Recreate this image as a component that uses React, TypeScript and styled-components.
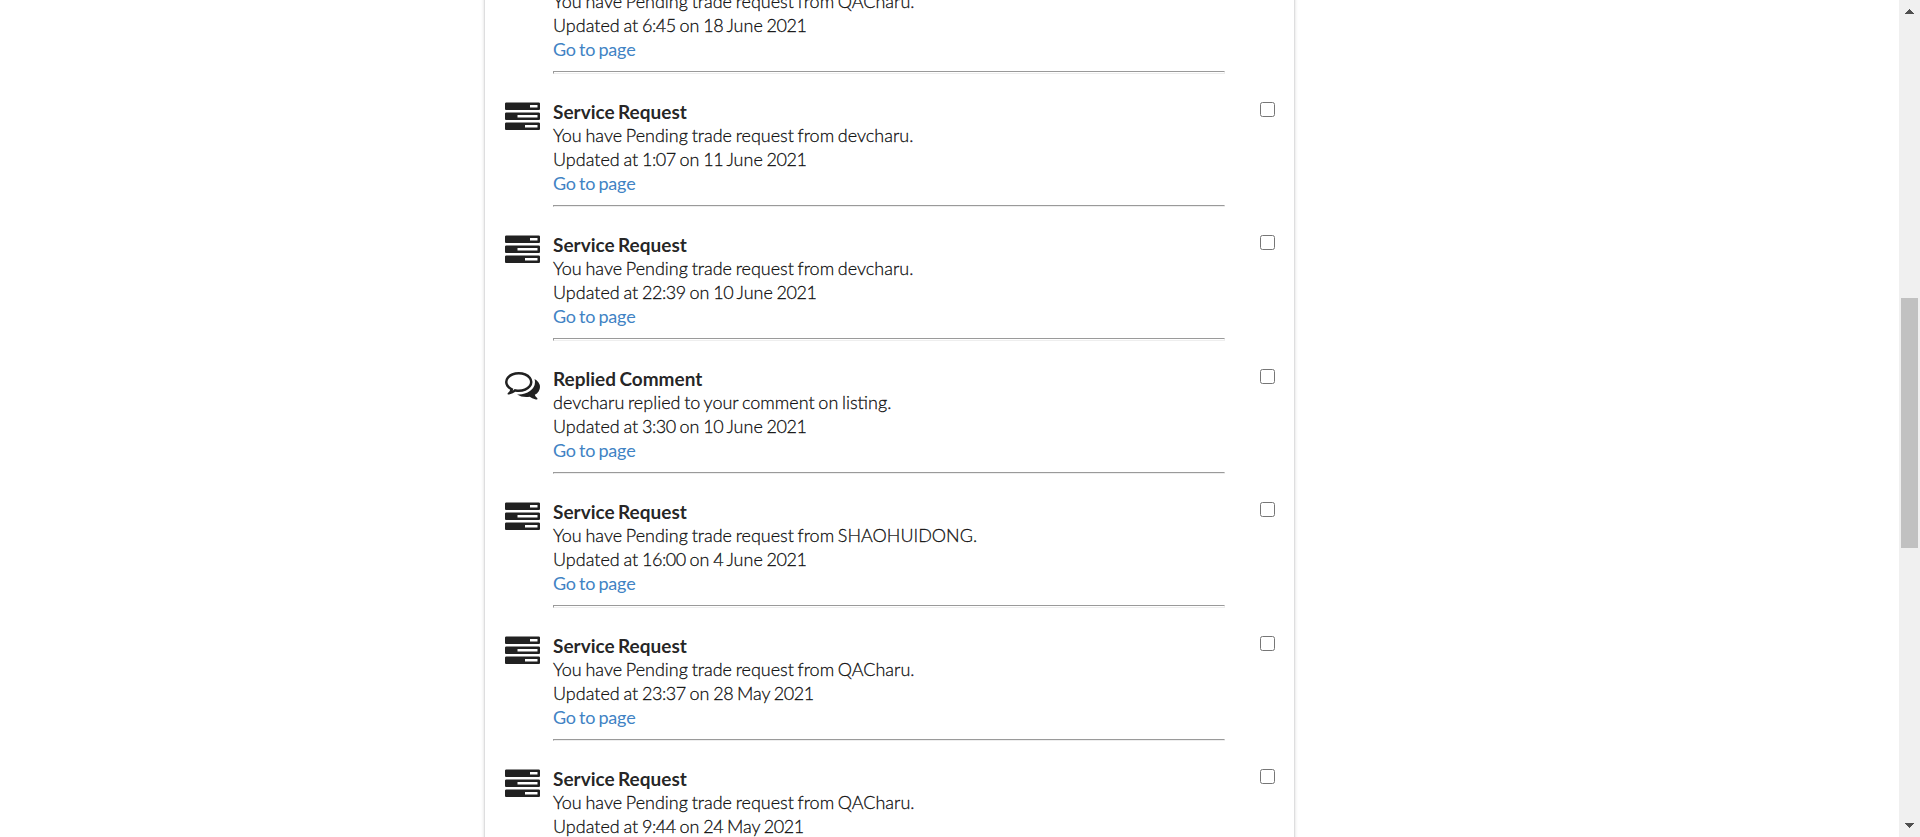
import React from "react";
import styled, { createGlobalStyle } from "styled-components";

const GlobalStyle = createGlobalStyle`
  * { box-sizing: border-box; }
  body {
    margin: 0;
    overflow: hidden;
    background: #fff;
    color: rgba(0, 0, 0, 0.87);
    font-family: Lato, "Liberation Sans", sans-serif;
    font-size: 18px;
    word-spacing: -1.2px;
  }
`;

const Page = styled.div`
  display: flex;
  height: 837px;
  overflow: hidden;
`;

const Main = styled.main`
  flex: 1;
  padding-left: 484px;
  overflow: hidden;
`;

const Segment = styled.section`
  width: 811px;
  margin-top: -52px;
  padding: 17.1px 19px 17.5px 20px;
  border: 1px solid rgba(34, 36, 38, 0.15);
  box-shadow: 0 1px 3px 0 rgba(34, 36, 38, 0.17);
`;

const Event = styled.article`
  display: flex;
  align-items: flex-start;
  height: 133.5px;
`;

const Label = styled.div`
  width: 48px;
  height: 35px;
  flex: none;
`;

const Icon = styled.svg`
  display: block;
  width: 35px;
  height: 35px;
  fill: #212121;
`;

const Content = styled.div`
  width: 672px;
  line-height: 24px;
`;

const Title = styled.div`
  height: 23px;
  font-weight: 700;
  font-size: 19px;
`;

const Text = styled.div`
  font-weight: 300;
  -webkit-text-stroke: 0.35px currentColor;
`;

const Digits = styled.span`
  letter-spacing: -0.42px;
`;

const PageLink = styled.a`
  display: block;
  width: fit-content;
  color: #4183c4;
  letter-spacing: -0.2px;
  text-decoration: none;
`;

const Divider = styled.hr`
  box-sizing: content-box;
  height: 0.5px;
  margin: 10px 0 0;
`;

const Check = styled.input`
  width: 15px;
  height: 15px;
  margin: 2px 0 0 auto;
`;

const ScrollTrack = styled.div`
  display: flex;
  flex-direction: column;
  justify-content: space-between;
  align-items: center;
  width: 21px;
  padding: 9px 0;
  background: #f0f0f0;
`;

const ScrollArrow = styled.svg`
  display: block;
  width: 9px;
  height: 5px;
  fill: #505050;
`;

const ScrollThumb = styled.div`
  width: 17px;
  height: 250px;
  margin-top: 9px;
  background: #c1c1c1;
`;

const TASKS =
  "M1024 1408h640v-128h-640v128zm-384-512h1024v-128h-1024v128zm640-512h384v-128h-384v128zm512 832v256q0 26-19 45t-45 19h-1664q-26 0-45-19t-19-45v-256q0-26 19-45t45-19h1664q26 0 45 19t19 45zm0-512v256q0 26-19 45t-45 19h-1664q-26 0-45-19t-19-45v-256q0-26 19-45t45-19h1664q26 0 45 19t19 45zm0-512v256q0 26-19 45t-45 19h-1664q-26 0-45-19t-19-45v-256q0-26 19-45t45-19h1664q26 0 45 19t19 45z";

const COMMENTS =
  "M704 384q-153 0-286 52t-211.5 141-78.5 191q0 82 53 158t149 132l97 56-35 84q34-20 62-39l44-31 53 10q78 14 153 14 153 0 286-52t211.5-141 78.5-191-78.5-191-211.5-141-286-52zm0-128q191 0 353.5 68.5t256.5 186.5 94 257-94 257-256.5 186.5-353.5 68.5q-86 0-176-16-124 88-278 128-36 9-86 16h-3q-11 0-20.5-8t-11.5-21q-1-3-1-6.5t.5-6.5 2-6l2.5-5 3.5-5.5 4-5 4.5-5 4-4.5q5-6 23-25t26-29.5 22.5-29 25-38.5 20.5-44q-124-72-195-177t-71-224q0-139 94-257t256.5-186.5 353.5-68.5zm822 1169q10 24 20.5 44t25 38.5 22.5 29 26 29.5 23 25q1 1 4 4.5t4.5 5 4 5 3.5 5.5l2.5 5 2 6 .5 6.5-1 6.5q-3 14-13 22t-22 7q-50-7-86-16-154-40-278-128-90 16-176 16-271 0-472-132 58 4 88 4 161 0 309-45t264-129q125-92 192-212t67-254q0-77-23-152 129 71 204 178t75 230q0 120-71 224.5t-195 176.5z";

type Notice = { kind: "request" | "comment"; text: string; date: string };

const notices: Notice[] = [
  { kind: "request", text: "You have Pending trade request from QACharu.", date: "6:45 on 18 June 2021" },
  { kind: "request", text: "You have Pending trade request from devcharu.", date: "1:07 on 11 June 2021" },
  { kind: "request", text: "You have Pending trade request from devcharu.", date: "22:39 on 10 June 2021" },
  { kind: "comment", text: "devcharu replied to your comment on listing.", date: "3:30 on 10 June 2021" },
  { kind: "request", text: "You have Pending trade request from SHAOHUIDONG.", date: "16:00 on 4 June 2021" },
  { kind: "request", text: "You have Pending trade request from QACharu.", date: "23:37 on 28 May 2021" },
  { kind: "request", text: "You have Pending trade request from QACharu.", date: "9:44 on 24 May 2021" },
];

function NoticeRow({ kind, text, date }: Notice) {
  return (
    <Event>
      <Label>
        <Icon viewBox="0 0 1792 1792">
          <path d={kind === "comment" ? COMMENTS : TASKS} />
        </Icon>
      </Label>
      <Content>
        <Title>{kind === "comment" ? "Replied Comment" : "Service Request"}</Title>
        <Text>{text}</Text>
        <Text>
          {`Updated at ${date}`
            .split(/([\d:]+)/)
            .map((part, i) => (i % 2 ? <Digits key={i}>{part}</Digits> : part))}
        </Text>
        <PageLink href="#">Go to page</PageLink>
        <Divider />
      </Content>
      <Check type="checkbox" />
    </Event>
  );
}

export default function App() {
  return (
    <>
      <GlobalStyle />
      <Page>
        <Main>
          <Segment>
            {notices.map((notice) => (
              <NoticeRow key={notice.date} {...notice} />
            ))}
          </Segment>
        </Main>
        <ScrollTrack>
          <ScrollArrow viewBox="0 0 9 5" shapeRendering="crispEdges">
            <path d="M4 0h1v1h1v1h1v1h1v1h1v1H0V4h1V3h1V2h1V1h1z" />
          </ScrollArrow>
          <ScrollThumb />
          <ScrollArrow viewBox="0 0 9 5" shapeRendering="crispEdges">
            <path d="M0 0h9v1H8v1H7v1H6v1H5v1H4V4H3V3H2V2H1V1H0z" />
          </ScrollArrow>
        </ScrollTrack>
      </Page>
    </>
  );
}
